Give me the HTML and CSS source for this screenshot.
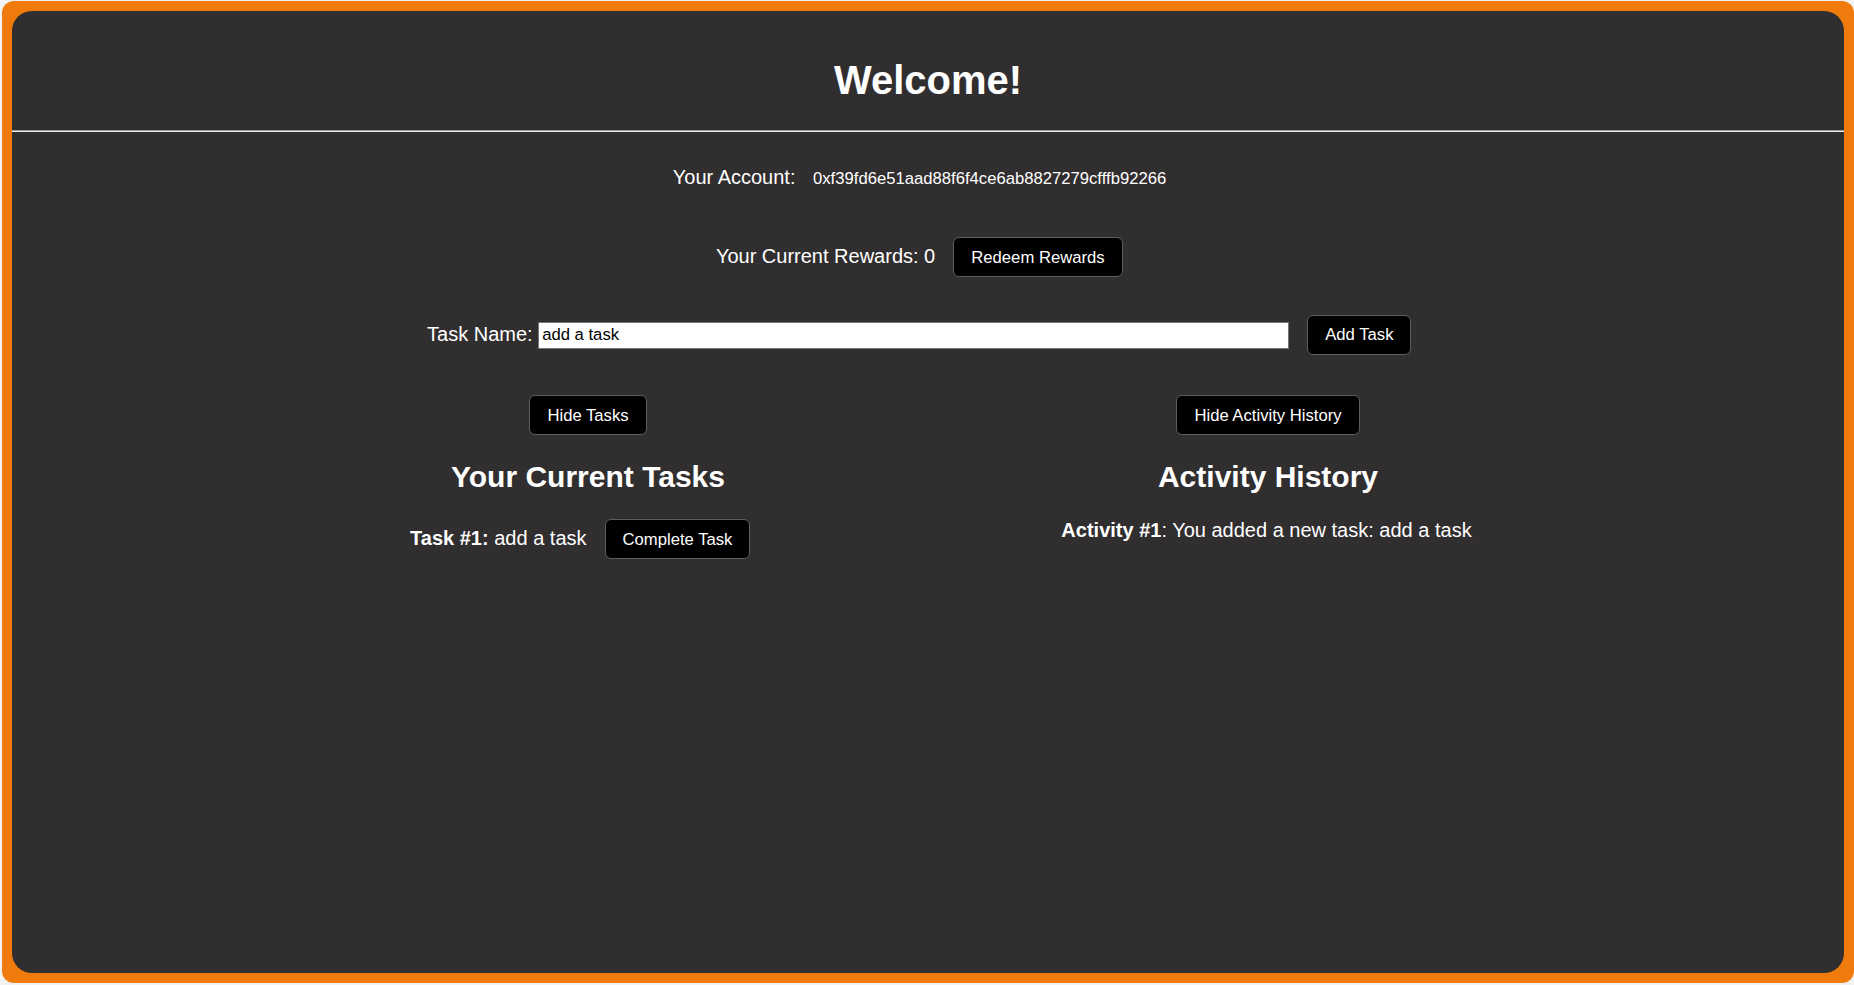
FILE: index.html
```html
<!DOCTYPE html>
<html lang="en">
<head>
<meta charset="utf-8">
<title>Welcome!</title>
<link rel="stylesheet" href="styles.css">
</head>
<body>
<div class="frame">
  <div class="panel">
    <header class="header">
      <h1 class="title">Welcome!</h1>
    </header>
    <div class="divider"></div>
    <main class="content">
      <div class="row row-account"><span class="label">Your Account:</span> <span class="account">0xf39fd6e51aad88f6f4ce6ab8827279cfffb92266</span></div>
      <div class="row row-rewards">Your Current Rewards: 0 <button class="btn">Redeem Rewards</button></div>
      <div class="row row-task">Task Name: <input class="task-input" type="text" value="add a task"> <button class="btn">Add Task</button></div>
      <div class="columns">
        <section class="column">
          <div class="toggle"><button class="btn">Hide Tasks</button></div>
          <h2 class="column-title">Your Current Tasks</h2>
          <p class="item"><strong>Task #1:</strong> add a task <button class="btn">Complete Task</button></p>
        </section>
        <section class="column">
          <div class="toggle"><button class="btn">Hide Activity History</button></div>
          <h2 class="column-title">Activity History</h2>
          <p class="item"><strong>Activity #1</strong>: You added a new task: add a task</p>
        </section>
      </div>
    </main>
  </div>
</div>
</body>
</html>
```

FILE: styles.css
```css
html, body {
  margin: 0;
  height: 100%;
}

body {
  background: #f2f2f2;
  padding: 1px 0 2px 2px;
  box-sizing: border-box;
  font-family: "Liberation Sans", Arial, sans-serif;
  color: #ffffff;
  overflow: hidden;
}

.frame {
  height: 100%;
  box-sizing: border-box;
  background: #f07b0c;
  padding: 10px;
  border-radius: 12px;
}

.panel {
  height: 100%;
  background: #312e2f;
  border-radius: 20px;
  display: flex;
  flex-direction: column;
}

.header {
  padding: 46px 0 27px;
  text-align: center;
}

.title {
  margin: 0;
  font-size: 40px;
  line-height: 46px;
  font-weight: bold;
}

.divider {
  height: 0;
  border-top: 1px solid #9c9c9c;
  border-bottom: 1px solid #ececec;
}

.content {
  display: flex;
  flex-direction: column;
  font-size: 20px;
}

.row {
  text-align: center;
  padding-right: 5px;
}

.row-account {
  margin-top: 34px;
}

.account {
  font-size: 16.67px;
  margin-left: 12px;
  margin-right: 12px;
}

.row-rewards {
  margin-top: 48px;
}

.row-task {
  margin-top: 37.5px;
}

.task-input {
  width: 751px;
  height: 27px;
  box-sizing: border-box;
  font-family: "Liberation Sans", Arial, sans-serif;
  font-size: 16.67px;
  color: #000;
  background: #fff;
  border: 1px solid #767676;
  padding: 1px 3px;
  margin: 0;
}

.btn {
  font-family: "Liberation Sans", Arial, sans-serif;
  font-size: 16.67px;
  line-height: 19px;
  color: #fff;
  background: #000;
  border: 1px solid #5e5e5e;
  border-radius: 6px;
  padding: 9.5px 17px;
  margin: 0 12.5px;
  cursor: pointer;
}

.columns {
  margin-top: 40.5px;
  display: flex;
  justify-content: center;
}

.column {
  width: 680px;
  text-align: center;
}

.toggle {
  line-height: 0;
}

.column-title {
  font-size: 30px;
  font-weight: bold;
  margin: 25px 0;
}

.item {
  margin: 0;
  font-size: 20px;
  padding-right: 3px;
}
```
